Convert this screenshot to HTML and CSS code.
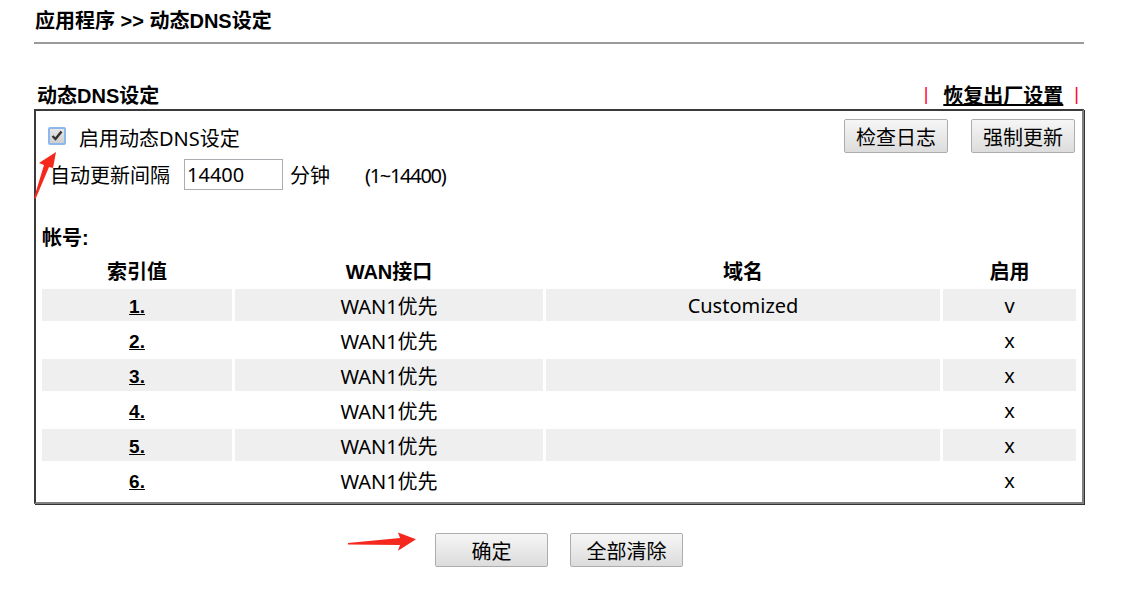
FILE: index.html
```html
<!DOCTYPE html>
<html lang="zh-CN">
<head>
    <meta charset="UTF-8">
    <title>动态DNS设定</title>
    <link rel="stylesheet" href="styles.css">
</head>
<body>
    <div class="page">
        <h1 class="page-title">应用程序 &gt;&gt; 动态DNS设定</h1>
        <div class="title-line"></div>

        <div class="section-head">
            <span class="section-title">动态DNS设定</span>
            <span class="reset-link"><span class="pipe">|</span><a href="#">恢复出厂设置</a><span class="pipe">|</span></span>
        </div>

        <div class="panel">
            <div class="top-row">
                <label class="enable">
                    <span class="checkbox"><svg width="12" height="11" viewBox="0 0 12 11"><path d="M1.5 6 L4.5 9 L10.5 1.5" fill="none" stroke="#333" stroke-width="2.4"/></svg></span>
                    启用动态DNS设定
                </label>
                <div class="top-buttons">
                    <button class="btn">检查日志</button>
                    <button class="btn">强制更新</button>
                </div>
            </div>
            <div class="interval-row">
                <span>自动更新间隔</span>
                <input class="interval" type="text" value="14400">
                <span>分钟<span class="range">(1~14400)</span></span>
            </div>

            <div class="account-label">帐号:</div>
            <table class="accounts">
                <tr>
                    <th class="c-idx">索引值</th>
                    <th class="c-wan">WAN接口</th>
                    <th class="c-dom">域名</th>
                    <th class="c-on">启用</th>
                </tr>
                <tr class="shade"><td><a href="#">1.</a></td><td>WAN1优先</td><td>Customized</td><td>v</td></tr>
                <tr><td><a href="#">2.</a></td><td>WAN1优先</td><td></td><td>x</td></tr>
                <tr class="shade"><td><a href="#">3.</a></td><td>WAN1优先</td><td></td><td>x</td></tr>
                <tr><td><a href="#">4.</a></td><td>WAN1优先</td><td></td><td>x</td></tr>
                <tr class="shade"><td><a href="#">5.</a></td><td>WAN1优先</td><td></td><td>x</td></tr>
                <tr><td><a href="#">6.</a></td><td>WAN1优先</td><td></td><td>x</td></tr>
            </table>
        </div>

        <div class="actions">
            <button class="btn btn-wide">确定</button>
            <button class="btn btn-wide">全部清除</button>
        </div>
    </div>

    <!-- annotation arrows -->
    <svg class="arrow arrow-check" width="30" height="52" viewBox="0 0 30 52">
        <polygon points="0,48 10,15 5,13 22,2 19,18 15,17 1.5,49" fill="#f5281e"/>
    </svg>
    <svg class="arrow arrow-ok" width="72" height="24" viewBox="0 0 72 24">
        <polygon points="0,13 52,8 50,2.5 68,9.3 50,20.7 52,15 0,14.5" fill="#f5281e"/>
    </svg>
</body>
</html>
```

FILE: styles.css
```css
body {
    margin: 0;
    padding: 0;
    font-family: "Noto Sans", "Noto Sans CJK SC", sans-serif;
    color: #000;
    background: #fff;
}
.page {
    position: relative;
    width: 1050px;
    padding: 8px 0 0 34px;
}
.page-title {
    font-family: "Liberation Sans", "Noto Sans CJK SC", sans-serif;
    font-size: 20px;
    font-weight: bold;
    margin: 0 0 0 1px;
    line-height: 26px;
}
.title-line {
    margin-top: 8px;
    height: 2px;
    background: #9a9a9a;
}
.section-head {
    display: flex;
    justify-content: space-between;
    align-items: center;
    margin-top: 37px;
    height: 26px;
    padding: 0 5px 0 3px;
}
.section-title {
    font-family: "Liberation Sans", "Noto Sans CJK SC", sans-serif;
    font-size: 20px;
    font-weight: bold;
}
.reset-link {
    font-family: "Liberation Sans", "Noto Sans CJK SC", sans-serif;
    font-size: 20px;
    font-weight: bold;
    display: flex;
    gap: 11px;
    align-items: center;
}
.reset-link a {
    color: #000;
    text-decoration: underline;
    margin-left: 4px;
}
.pipe {
    color: #ff0033;
    font-weight: normal;
    font-size: 18px;
}
.panel {
    margin-top: 2px;
    border: 2px solid;
    border-color: #3a3a3a #808080 #808080 #3a3a3a;
    box-shadow: 1px 1px 0 #333;
    padding: 7px 3px 3px 3px;
}
.top-row {
    display: flex;
    justify-content: space-between;
    align-items: center;
    padding: 1px 4px 0 9px;
}
.enable {
    display: flex;
    align-items: center;
    gap: 13px;
    font-size: 20px;
    margin-top: 3px;
}
.checkbox {
    width: 14px;
    height: 14px;
    border: 2px solid #8cb8ec;
    border-radius: 2px;
    background: linear-gradient(#e6e6e6, #cfcfcf);
    display: flex;
    align-items: center;
    justify-content: center;
    margin-top: -4px;
}
.top-buttons {
    display: flex;
    gap: 23px;
}
.btn {
    font-family: "Noto Sans", "Noto Sans CJK SC", sans-serif;
    font-size: 20px;
    height: 34px;
    padding: 0 11px;
    color: #000;
    background: linear-gradient(#f6f6f6, #dcdcdc);
    border: 1px solid #adadad;
    border-radius: 2px;
}
.interval-row {
    display: flex;
    align-items: center;
    gap: 7px;
    font-size: 20px;
    padding-left: 11px;
    margin-top: 6px;
}
.interval {
    width: 99px;
    height: 31px;
    box-sizing: border-box;
    border: 1px solid #abadb3;
    font-family: "Noto Sans", sans-serif;
    font-size: 20px;
    padding: 0 2px;
    margin: 0 0 0 7px;
}
.range {
    margin-left: 35px;
    letter-spacing: -1.3px;
}
.account-label {
    font-family: "Liberation Sans", "Noto Sans CJK SC", sans-serif;
    font-size: 20px;
    font-weight: bold;
    margin-top: 32px;
    padding-left: 3px;
}
.accounts {
    width: 100%;
    border-collapse: separate;
    border-spacing: 3px;
    margin-top: 2px;
    font-size: 20px;
}
.accounts th {
    font-family: "Liberation Sans", "Noto Sans CJK SC", sans-serif;
    font-size: 20px;
    height: 29px;
    padding: 0 0 1px 0;
    font-weight: bold;
}
.accounts td {
    height: 32px;
    padding: 0;
    text-align: center;
}
.accounts .shade td {
    background: #efefef;
}
.accounts a {
    color: #000;
    font-family: "Liberation Sans", sans-serif;
    font-weight: bold;
    font-size: 19px;
}
.c-idx { width: 190px; }
.c-wan { width: 308px; }
.c-dom { width: 394px; }
.c-on { width: 133px; }
.actions {
    display: flex;
    gap: 22px;
    padding-left: 401px;
    margin-top: 29px;
}
.btn-wide {
    width: 113px;
}
.arrow {
    position: absolute;
}
.arrow-check {
    left: 34px;
    top: 150px;
}
.arrow-ok {
    left: 348px;
    top: 530px;
}
```
